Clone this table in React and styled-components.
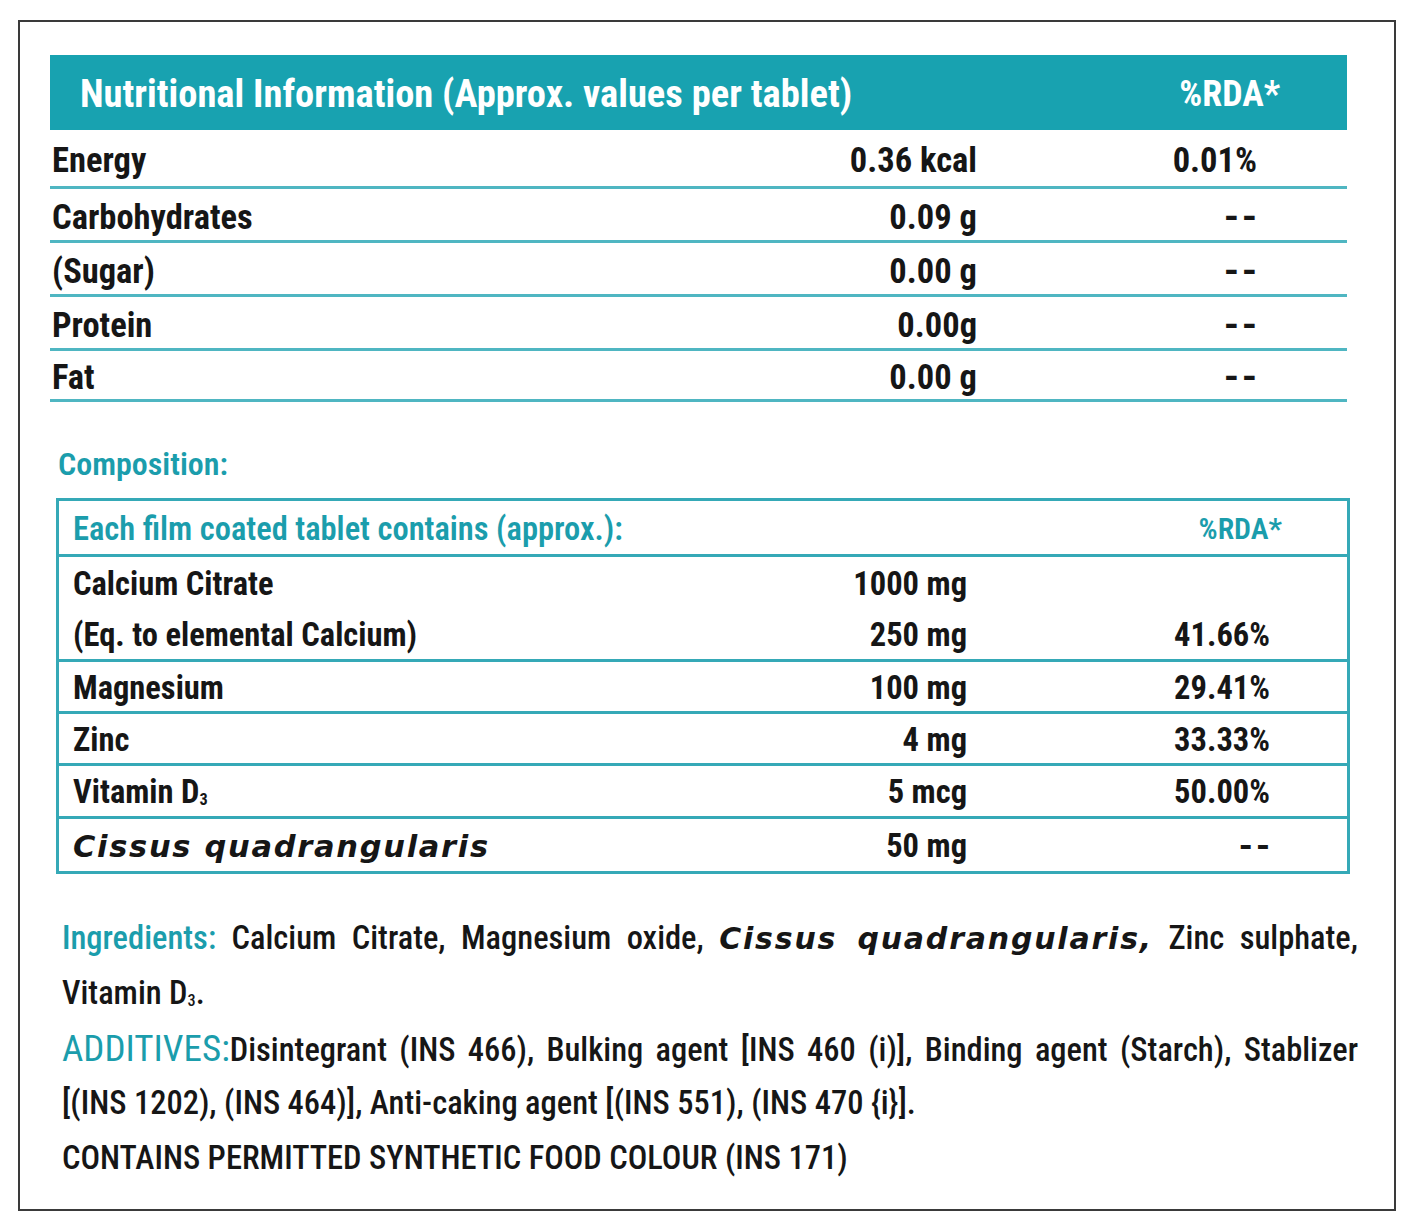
import React from 'react'
import styled, { createGlobalStyle } from 'styled-components'

const TEAL = '#18a2b0'
const TEAL_TEXT = '#1b9dac'
const LINE = '#4fb6c2'
const BOX_LINE = '#35a9b7'
const INK = '#161616'

const GlobalStyle = createGlobalStyle`
  body {
    margin: 0;
    background: #ffffff;
    font-family: Roboto, "DejaVu Sans Condensed", sans-serif;
    font-stretch: 75%;
    color: ${INK};
  }
`

const Page = styled.div`
  padding: 20px 0 0 18px;
`

const Frame = styled.div`
  box-sizing: border-box;
  width: 1378px;
  height: 1191px;
  border: 2px solid #3a3a3a;
  padding: 33px 47px 0 30px;
`

const HeaderBar = styled.div`
  display: flex;
  align-items: center;
  justify-content: space-between;
  height: 75px;
  padding: 2px 67px 0 30px;
  box-sizing: border-box;
  background: ${TEAL};
  color: #ffffff;
  font-size: 38.5px;
  font-weight: 700;
`

const HeaderRda = styled.span`
  font-size: 36px;
`

const NutRow = styled.div`
  display: flex;
  align-items: center;
  box-sizing: border-box;
  height: ${p => p.$height}px;
  padding: 4px 90px 0 2px;
  border-bottom: 3px solid ${LINE};
  font-size: 34.5px;
  font-weight: 700;
`

const Label = styled.div`
  flex: 1;
`

const Value = styled.div`
  width: ${p => p.$width}px;
  text-align: right;
`

const Dash = styled.span`
  font-stretch: 100%;
  font-weight: 700;
  font-size: 1.1em;
  letter-spacing: 3px;
  margin-right: -3px;
`

const SectionTitle = styled.div`
  margin: 42px 0 14px 8px;
  height: 40px;
  line-height: 40px;
  color: ${TEAL_TEXT};
  font-size: 32px;
  font-weight: 600;
`

const CompBox = styled.div`
  margin: 0 -3px 0 6px;
  border: 3px solid ${BOX_LINE};
`

const CompRow = styled.div`
  display: flex;
  flex-direction: column;
  border-bottom: ${p => (p.$last ? 'none' : `3px solid ${BOX_LINE}`)};
`

const CompLine = styled.div`
  display: flex;
  align-items: center;
  height: ${p => p.$height}px;
  padding: 2px 77px 0 14px;
  box-sizing: border-box;
  font-size: 32.5px;
  font-weight: ${p => (p.$teal ? 600 : 700)};
  color: ${p => (p.$teal ? TEAL_TEXT : INK)};
`

const CompRda = styled.div`
  width: 303px;
  text-align: right;
  font-size: ${p => (p.$small ? '30px' : 'inherit')};
  margin-right: ${p => (p.$small ? '-12px' : '0')};
`

const Latin = styled.span`
  font-family: "DejaVu Sans", "Liberation Sans", sans-serif;
  font-stretch: normal;
  font-style: italic;
  font-weight: 700;
  font-size: ${p => p.$size || 30.5}px;
  letter-spacing: ${p => p.$spacing || 1.7}px;
`

const Sub = styled.sub`
  font-size: 0.5em;
  vertical-align: -0.1em;
`

const Notes = styled.div`
  margin: 37px -11px 0 12px;
  font-size: 32.5px;
  font-weight: 500;
`

const NoteLine = styled.div`
  height: 55px;
  line-height: 55px;
  white-space: nowrap;
  text-align: ${p => (p.$justify ? 'justify' : 'left')};
  text-align-last: ${p => (p.$justify ? 'justify' : 'left')};
`

const Key = styled.span`
  color: ${TEAL_TEXT};
  font-size: ${p => p.$size || 32.5}px;
  font-weight: ${p => p.$weight || 500};
`

const nutrition = [
  { name: 'Energy', value: '0.36 kcal', rda: '0.01%', height: 59 },
  { name: 'Carbohydrates', value: '0.09 g', rda: '--', height: 54 },
  { name: '(Sugar)', value: '0.00 g', rda: '--', height: 54 },
  { name: 'Protein', value: '0.00g', rda: '--', height: 54 },
  { name: 'Fat', value: '0.00 g', rda: '--', height: 51 }
]

const composition = [
  {
    lines: [
      { name: 'Calcium Citrate', value: '1000 mg', rda: '' },
      { name: '(Eq. to elemental Calcium)', value: '250 mg', rda: '41.66%' }
    ],
    height: 51
  },
  { lines: [{ name: 'Magnesium', value: '100 mg', rda: '29.41%' }], height: 49 },
  { lines: [{ name: 'Zinc', value: '4 mg', rda: '33.33%' }], height: 49 },
  { lines: [{ name: <>Vitamin D<Sub>3</Sub></>, value: '5 mcg', rda: '50.00%' }], height: 50 },
  { lines: [{ name: <Latin>Cissus quadrangularis</Latin>, value: '50 mg', rda: '--' }], height: 52 }
]

const showRda = rda => (rda === '--' ? <Dash>--</Dash> : rda)

const App = () => (
  <Page>
    <GlobalStyle />
    <Frame>
      <HeaderBar>
        <span>Nutritional Information (Approx. values per tablet)</span>
        <HeaderRda>%RDA*</HeaderRda>
      </HeaderBar>
      {nutrition.map(row => (
        <NutRow key={row.name} $height={row.height}>
          <Label>{row.name}</Label>
          <Value $width={300}>{row.value}</Value>
          <Value $width={280}>{showRda(row.rda)}</Value>
        </NutRow>
      ))}

      <SectionTitle>Composition:</SectionTitle>
      <CompBox>
        <CompRow>
          <CompLine $height={53} $teal>
            <Label>Each film coated tablet contains (approx.):</Label>
            <CompRda $small>%RDA*</CompRda>
          </CompLine>
        </CompRow>
        {composition.map((row, i) => (
          <CompRow key={i} $last={i === composition.length - 1}>
            {row.lines.map((line, j) => (
              <CompLine key={j} $height={row.height}>
                <Label>{line.name}</Label>
                <Value $width={300}>{line.value}</Value>
                <CompRda>{showRda(line.rda)}</CompRda>
              </CompLine>
            ))}
          </CompRow>
        ))}
      </CompBox>

      <Notes>
        <NoteLine $justify>
          <Key>Ingredients:</Key> Calcium Citrate, Magnesium oxide,{' '}
          <Latin $size={30} $spacing={1.8}>Cissus quadrangularis,</Latin> Zinc sulphate,
        </NoteLine>
        <NoteLine>Vitamin D<Sub>3</Sub>.</NoteLine>
        <NoteLine $justify>
          <Key $size={37} $weight={400}>ADDITIVES:</Key>Disintegrant (INS 466), Bulking agent [INS 460 (i)], Binding agent (Starch), Stablizer
        </NoteLine>
        <NoteLine>[(INS 1202), (INS 464)], Anti-caking agent [(INS 551), (INS 470 {'{i}'}].</NoteLine>
        <NoteLine>CONTAINS PERMITTED SYNTHETIC FOOD COLOUR (INS 171)</NoteLine>
      </Notes>
    </Frame>
  </Page>
)

export default App
